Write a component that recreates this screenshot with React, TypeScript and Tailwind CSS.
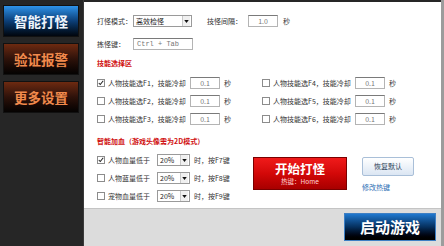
import React from 'react';

const font = { fontFamily: '"Noto Sans CJK SC", "Liberation Sans", sans-serif' };

const Check: React.FC<{ checked?: boolean }> = ({ checked }) => (
  <span className="relative inline-block w-[8px] h-[8px] border border-[#8c8c8c] bg-white shrink-0">
    {checked && (
      <svg viewBox="0 0 8 8" className="absolute left-0 top-0 w-[6px] h-[6px]">
        <path d="M1 4 L3 6 L7 1" stroke="#222" strokeWidth="1.4" fill="none" />
      </svg>
    )}
  </span>
);

const Box: React.FC<{ value: string; w: string; mono?: boolean }> = ({ value, w, mono }) => (
  <span
    className={`${w} h-[12px] shrink-0 border border-[#b4b4b4] border-t-[#7a7a7a] bg-white flex items-center text-[7px] text-[#777] ${mono ? 'justify-start pl-[3px] text-[#111]' : 'justify-center'}`}
    style={mono ? { fontFamily: '"Liberation Mono", monospace' } : undefined}
  >
    {value}
  </span>
);

const Select: React.FC<{ value: string; w: string }> = ({ value, w }) => (
  <span className={`${w} h-[12px] shrink-0 border border-[#9a9a9a] bg-white flex items-center justify-between text-[7px] text-[#222]`}>
    <span className="pl-[2px] whitespace-nowrap">{value}</span>
    <span className="w-[8px] h-[10px] mr-[1px] bg-[#f0f0f0] border-l border-[#c8c8c8] flex items-center justify-center">
      <svg viewBox="0 0 6 4" className="w-[5px] h-[3px]">
        <path d="M0 0 L6 0 L3 4 Z" fill="#111" />
      </svg>
    </span>
  </span>
);

const SideBtn: React.FC<{ label: string; active?: boolean }> = ({ label, active }) => (
  <div
    className={`h-[32px] flex items-center justify-center text-[13.5px] font-bold border border-[#111] ${
      active
        ? 'bg-gradient-to-b from-[#2e93ea] via-[#0c3f78] to-[#01060e] text-[#eef4fb]'
        : 'bg-gradient-to-b from-[#6e2a10] via-[#2e120a] to-[#050302] text-[#f28a4c]'
    }`}
  >
    {label}
  </div>
);

const SkillRow: React.FC<{ n: number; checked?: boolean }> = ({ n, checked }) => (
  <div className="flex items-center h-[18px]">
    <Check checked={checked} />
    <span className="ml-[3px] w-[82px] shrink-0 text-[7px] text-[#333] whitespace-nowrap">人物技能选F{n}，技能冷却</span>
    <Box value="0.1" w="w-[30px]" />
    <span className="ml-[4px] text-[7px] text-[#333]">秒</span>
  </div>
);

const HpRow: React.FC<{ label: string; key2: string; checked?: boolean }> = ({ label, key2, checked }) => (
  <div className="flex items-center h-[18px]">
    <Check checked={checked} />
    <span className="ml-[3px] w-[49px] shrink-0 text-[7px] text-[#333] whitespace-nowrap">{label}</span>
    <Select value="20%" w="w-[33px]" />
    <span className="ml-[4px] text-[7px] text-[#333] whitespace-nowrap">时，按{key2}键</span>
  </div>
);

export default function App() {
  return (
    <div className="w-[444px] h-[246px] flex bg-[#262626] overflow-hidden" style={font}>
      {/* sidebar */}
      <div className="w-[84px] flex flex-col gap-[6px] pt-[5px] pl-[3px] pr-[4px] border-r border-[#3a3a3a]">
        <SideBtn label="智能打怪" active />
        <SideBtn label="验证报警" />
        <SideBtn label="更多设置" />
      </div>

      <div className="flex-1 flex flex-col pt-[2px] border-r-[3px] border-[#9c9c9c]">
        {/* main panel */}
        <div className="h-[206px] bg-white pl-[13px] pt-[11px] text-[7px] text-[#333]">
          <div className="flex items-center h-[16px] whitespace-nowrap">
            <span className="w-[36px] shrink-0">打怪模式：</span>
            <Select value="高效检怪" w="w-[59px]" />
            <span className="ml-[15px] w-[41px] shrink-0">技怪间隔：</span>
            <Box value="1.0" w="w-[30px]" />
            <span className="ml-[5px]">秒</span>
          </div>
          <div className="flex items-center h-[16px] mt-[7px] whitespace-nowrap">
            <span className="w-[36px] shrink-0">拣怪键：</span>
            <Box value="Ctrl + Tab" w="w-[60px]" mono />
          </div>
          <div className="mt-[4px] h-[14px] flex items-center text-[#d01010] font-bold">技能选择区</div>
          <div className="flex mt-[4px]">
            <div className="w-[165px] flex flex-col">
              <SkillRow n={1} checked />
              <SkillRow n={2} />
              <SkillRow n={3} />
            </div>
            <div className="flex flex-col">
              <SkillRow n={4} />
              <SkillRow n={5} />
              <SkillRow n={6} />
            </div>
          </div>
          <div className="mt-[6px] h-[14px] flex items-center text-[#d01010] font-bold">智能加血（游戏头像需为2D模式）</div>
          <div className="flex mt-[3px]">
            <div className="w-[156px] flex flex-col">
              <HpRow label="人物血量低于" key2="F7" checked />
              <HpRow label="人物蓝量低于" key2="F8" />
              <HpRow label="宠物血量低于" key2="F9" />
            </div>
            <div className="mt-[6px] w-[94px] h-[33px] border border-[#7a0000] bg-gradient-to-b from-[#f01a1a] via-[#d30808] to-[#a80000] flex flex-col items-center justify-center">
              <span className="text-[12.5px] font-bold text-white leading-none">开始打怪</span>
              <span className="mt-[3px] text-[6.5px] text-[#ffd6d6] leading-none">热键：Home</span>
            </div>
            <div className="ml-[15px] mt-[6px] flex flex-col">
              <div className="w-[52px] h-[19px] border border-[#a9bfd8] rounded-[2px] bg-gradient-to-b from-[#ffffff] to-[#dbe6f3] flex items-center justify-center text-[7px] text-[#2b3d55]">
                恢复默认
              </div>
              <span className="mt-[6px] text-[7px] text-[#2a6db3]">修改热键</span>
            </div>
          </div>
        </div>

        {/* bottom bar */}
        <div className="flex-1 bg-[#dcdcdc] border-t border-[#c4c4c4] flex justify-end items-start pt-[4px] pr-[5px]">
          <div className="w-[92px] h-[28px] border border-[#3d7fc4] bg-gradient-to-b from-[#1f78cf] via-[#06305e] to-[#000000] flex items-center justify-center text-[15px] font-bold text-white">
            启动游戏
          </div>
        </div>
      </div>
    </div>
  );
}
